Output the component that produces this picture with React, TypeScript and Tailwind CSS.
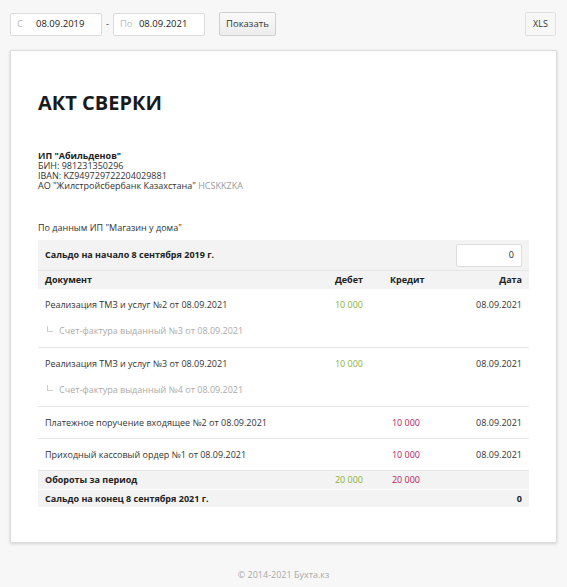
import React from 'react';

interface Row {
  doc: string;
  sub?: string;
  debit?: string;
  credit?: string;
  date: string;
}

const rows: Row[] = [
  { doc: 'Реализация ТМЗ и услуг №2 от 08.09.2021', sub: 'Счет-фактура выданный №3 от 08.09.2021', debit: '10 000', date: '08.09.2021' },
  { doc: 'Реализация ТМЗ и услуг №3 от 08.09.2021', sub: 'Счет-фактура выданный №4 от 08.09.2021', debit: '10 000', date: '08.09.2021' },
  { doc: 'Платежное поручение входящее №2 от 08.09.2021', credit: '10 000', date: '08.09.2021' },
  { doc: 'Приходный кассовый ордер №1 от 08.09.2021', credit: '10 000', date: '08.09.2021' },
];

const cols = 'grid grid-cols-[1fr_60px_57px_102px] px-[7px]';

const App: React.FC = () => {
  return (
    <div className="min-h-[587px] bg-[#f7f7f7] text-[9px] text-[#333] font-['Open_Sans',sans-serif]">
      {/* Toolbar */}
      <div className="flex items-center px-[10px] pt-[12px] h-[36px]">
        <div className="flex items-center w-[92px] h-[23px] bg-white border border-[#dcdcdc] rounded-[2px] text-[9.5px]">
          <span className="pl-[6px] w-[25px] text-[#bbb]">С</span>
          <span className="text-[#222]">08.09.2019</span>
        </div>
        <span className="mx-[4px] text-[#333]">-</span>
        <div className="flex items-center w-[92px] h-[23px] bg-white border border-[#dcdcdc] rounded-[2px] text-[9.5px]">
          <span className="pl-[6px] w-[25px] text-[#bbb]">По</span>
          <span className="text-[#222]">08.09.2021</span>
        </div>
        <button className="ml-[14px] h-[24px] w-[57px] border border-[#d0d0d0] rounded-[2px] bg-gradient-to-b from-[#fafafa] to-[#ececec] text-[9.5px] text-[#333]">
          Показать
        </button>
        <button className="ml-auto mr-[1px] h-[24px] w-[31px] border border-[#e0e0e0] rounded-[2px] bg-[#f7f7f7] text-[9px] text-[#333]">
          XLS
        </button>
      </div>

      {/* Card */}
      <div className="mx-[10px] mt-[14px] h-[493px] bg-white border border-[#dcdcdc] shadow-[0_1px_3px_rgba(0,0,0,0.15)] px-[27px] pt-[40px]">
        <h1 className="text-[20px] font-bold text-[#1a1a1a] leading-[24px]">АКТ СВЕРКИ</h1>

        <div className="mt-[36px] leading-[10px]">
          <div className="font-bold text-[#222]">ИП "Абильденов"</div>
          <div>БИН: 981231350296</div>
          <div>IBAN: KZ949729722204029881</div>
          <div>
            АО "Жилстройсбербанк Казахстана" <span className="text-[#999]">HCSKKZKA</span>
          </div>
        </div>

        <div className="mt-[31px] leading-[12px]">По данным ИП "Магазин у дома"</div>

        <div className="mt-[6px] w-[491px]">
          <div className="flex items-center justify-between bg-[#f3f3f3] h-[30px] pl-[7px] pr-[7px] font-bold text-[#222]">
            <span>Сальдо на начало 8 сентября 2019 г.</span>
            <div className="w-[66px] h-[23px] bg-white border border-[#ddd] rounded-[2px] flex items-center justify-end pr-[7px] font-normal">0</div>
          </div>
          <div className={`${cols} items-center bg-[#f3f3f3] h-[19px] border-t border-[#e6e6e6] font-bold text-[#222]`}>
            <span>Документ</span>
            <span className="text-right">Дебет</span>
            <span className="pl-[27px]">Кредит</span>
            <span className="text-right">Дата</span>
          </div>

          {rows.map((r, i) => (
            <div key={i} className={`${cols} border-b border-[#e6e6e6] pt-[11px] ${r.sub ? 'pb-[11px]' : 'pb-[10px]'}`}>
              <div>
                <div className="leading-[10px]">{r.doc}</div>
                {r.sub && (
                  <div className="mt-[16px] flex items-start leading-[10px] text-[#aaa]">
                    <span className="ml-[2px] mr-[6px] w-[6px] h-[6px] border-l border-b border-[#ccc]"></span>
                    <span>{r.sub}</span>
                  </div>
                )}
              </div>
              <span className="text-right leading-[10px] text-[#86b13a]">{r.debit}</span>
              <span className="text-right leading-[10px] text-[#c0185a]">{r.credit}</span>
              <span className="text-right leading-[10px]">{r.date}</span>
            </div>
          ))}

          <div className={`${cols} items-center bg-[#f3f3f3] h-[18px] font-bold text-[#222]`}>
            <span>Обороты за период</span>
            <span className="text-right font-normal text-[#86b13a]">20 000</span>
            <span className="text-right font-normal text-[#c0185a]">20 000</span>
            <span></span>
          </div>
          <div className={`${cols} items-center bg-[#f3f3f3] h-[18px] border-t border-white font-bold text-[#222]`}>
            <span>Сальдо на конец 8 сентября 2021 г.</span>
            <span></span>
            <span></span>
            <span className="text-right">0</span>
          </div>
        </div>
      </div>

      <div className="text-center mt-[25px] text-[#aaa] text-[9px]">© 2014-2021 Бухта.кз</div>
    </div>
  );
};

export default App;
